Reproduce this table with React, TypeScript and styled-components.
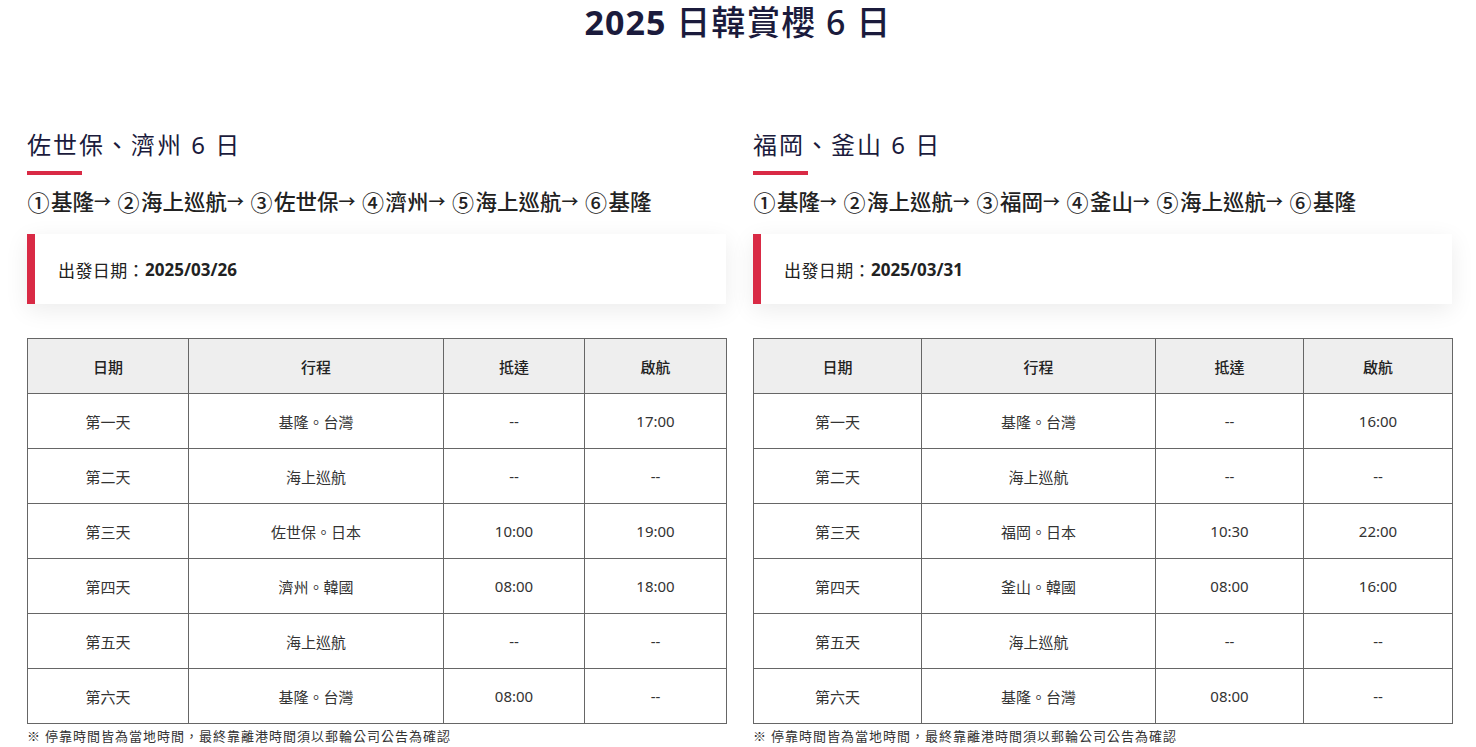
import React from "react"
import styled, { createGlobalStyle } from "styled-components"

const GlobalStyle = createGlobalStyle`
  html, body {
    margin: 0;
    padding: 0;
    background: #fff;
    font-family: "Noto Sans", "Noto Sans CJK TC", sans-serif;
    color: #222;
  }
`

const cjk = `"Noto Sans CJK TC", "Noto Sans", sans-serif`

const Page = styled.div`
  width: 1476px;
  height: 747px;
  overflow: hidden;
`

const Title = styled.h1`
  margin: 0;
  padding-top: 1px;
  text-align: center;
  font-size: 34px;
  line-height: 42px;
  font-weight: 500;
  color: #1b1b3c;
  letter-spacing: 1px;

  b {
    font-weight: 700;
  }
`

const Columns = styled.div`
  display: grid;
  grid-template-columns: 699px 699px;
  column-gap: 27px;
  padding: 85px 0 0 27px;
`

const Column = styled.section`
  display: flex;
  flex-direction: column;
`

const Heading = styled.h2`
  margin: 0;
  font-size: 24px;
  line-height: 34px;
  font-weight: 400;
  color: #1b1b3c;
  letter-spacing: 2px;
`

const Underline = styled.div`
  width: 55px;
  height: 4px;
  background: #d92a45;
  margin-top: 9px;
`

const Route = styled.div`
  margin-top: 11px;
  display: flex;
  align-items: center;
  font-family: ${cjk};
  font-size: 21.5px;
  line-height: 30px;
  font-weight: 500;
  color: #222;
  white-space: nowrap;
`

const Num = styled.span`
  display: inline-block;
  width: 23px;
  margin-right: 1px;
  text-align: center;
  font-size: 22px;
  line-height: 30px;
`

const Arrow = styled.span`
  display: inline-block;
  width: 23px;
  font-size: 17px;
  text-align: left;
`

const DateBox = styled.div`
  margin-top: 18px;
  height: 70px;
  display: flex;
  align-items: center;
  padding-left: 23px;
  border-left: 8px solid #d92a45;
  background: #fff;
  box-shadow: 0 6px 22px rgba(0, 0, 0, 0.08);
  font-size: 17px;
  color: #222;
`

const Label = styled.span`
  font-family: ${cjk};
  letter-spacing: 0.4px;
`

const DateValue = styled.span`
  font-weight: 700;
`

const Table = styled.table`
  margin-top: 34px;
  width: 699px;
  border-collapse: collapse;
  table-layout: fixed;
  font-size: 15px;

  th,
  td {
    border: 1px solid #666;
    height: 54px;
    padding: 0;
    text-align: center;
  }

  th {
    background: #eee;
    font-weight: 500;
    color: #222;
  }

  td {
    color: #333;
    font-weight: 400;
  }
`

const Note = styled.p`
  margin: 2px 0 0;
  font-family: ${cjk};
  font-size: 13px;
  line-height: 20px;
  letter-spacing: 1px;
  color: #333;
`

type Row = [string, string, string, string]

interface Trip {
  title: string
  stops: string[]
  date: string
  cols: number[]
  rows: Row[]
}

const circled = ["①", "②", "③", "④", "⑤", "⑥"]

const trips: Trip[] = [
  {
    title: "佐世保、濟州 6 日",
    stops: ["基隆", "海上巡航", "佐世保", "濟州", "海上巡航", "基隆"],
    date: "2025/03/26",
    cols: [161, 255, 141, 142],
    rows: [
      ["第一天", "基隆。台灣", "--", "17:00"],
      ["第二天", "海上巡航", "--", "--"],
      ["第三天", "佐世保。日本", "10:00", "19:00"],
      ["第四天", "濟州。韓國", "08:00", "18:00"],
      ["第五天", "海上巡航", "--", "--"],
      ["第六天", "基隆。台灣", "08:00", "--"],
    ],
  },
  {
    title: "福岡、釜山 6 日",
    stops: ["基隆", "海上巡航", "福岡", "釜山", "海上巡航", "基隆"],
    date: "2025/03/31",
    cols: [168, 234, 148, 149],
    rows: [
      ["第一天", "基隆。台灣", "--", "16:00"],
      ["第二天", "海上巡航", "--", "--"],
      ["第三天", "福岡。日本", "10:30", "22:00"],
      ["第四天", "釜山。韓國", "08:00", "16:00"],
      ["第五天", "海上巡航", "--", "--"],
      ["第六天", "基隆。台灣", "08:00", "--"],
    ],
  },
]

const headers = ["日期", "行程", "抵達", "啟航"]

const TripColumn = ({ trip }: { trip: Trip }) => (
  <Column>
    <Heading>{trip.title}</Heading>
    <Underline />
    <Route>
      {trip.stops.map((s, i) => (
        <React.Fragment key={i}>
          <Num>{circled[i]}</Num>
          {s}
          {i < trip.stops.length - 1 && <Arrow>→</Arrow>}
        </React.Fragment>
      ))}
    </Route>
    <DateBox>
      <Label>出發日期：</Label>
      <DateValue>{trip.date}</DateValue>
    </DateBox>
    <Table>
      <colgroup>
        {trip.cols.map((w, i) => (
          <col key={i} style={{ width: w }} />
        ))}
      </colgroup>
      <thead>
        <tr>
          {headers.map((h) => (
            <th key={h}>{h}</th>
          ))}
        </tr>
      </thead>
      <tbody>
        {trip.rows.map((r) => (
          <tr key={r[0]}>
            {r.map((c, i) => (
              <td key={i}>{c}</td>
            ))}
          </tr>
        ))}
      </tbody>
    </Table>
    <Note>※ 停靠時間皆為當地時間，最終靠離港時間須以郵輪公司公告為確認</Note>
  </Column>
)

const App = () => (
  <Page>
    <GlobalStyle />
    <Title>
      <b>2025</b> 日韓賞櫻 6 日
    </Title>
    <Columns>
      {trips.map((t) => (
        <TripColumn key={t.date} trip={t} />
      ))}
    </Columns>
  </Page>
)

export default App
